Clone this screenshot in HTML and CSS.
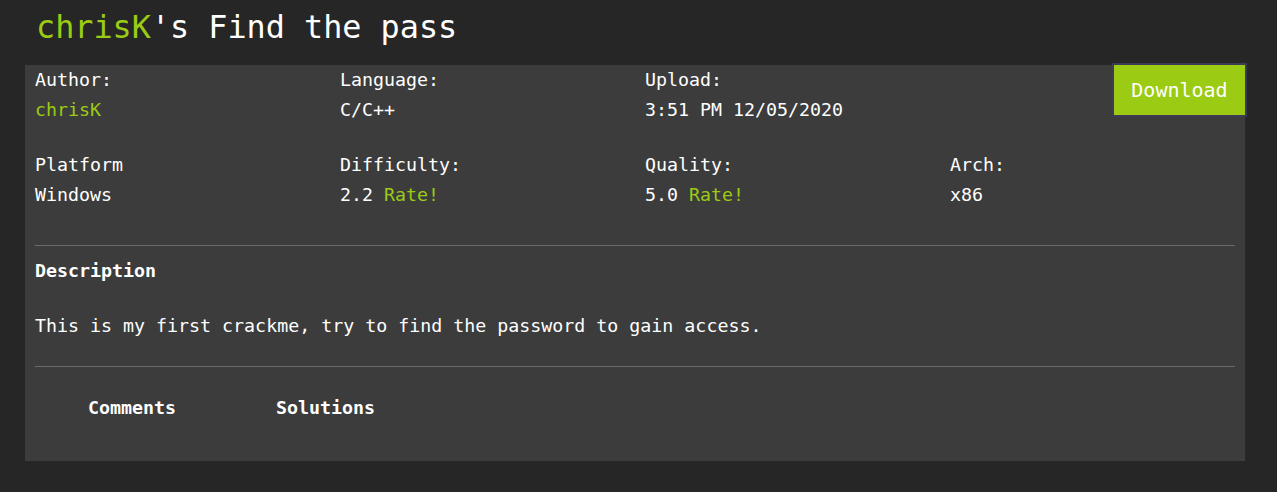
FILE: index.html
```html
<!DOCTYPE html>
<html lang="en">
<head>
<meta charset="utf-8">
<title>chrisK's Find the pass</title>
<link rel="stylesheet" href="styles.css">
</head>
<body>
<div class="page">
  <h1 class="title"><span class="green">chrisK</span>'s Find the pass</h1>
  <div class="card">
    <a class="download" href="#">Download</a>
    <div class="grid">
      <div class="cell"><div class="label">Author:</div><div class="value green">chrisK</div></div>
      <div class="cell"><div class="label">Language:</div><div class="value">C/C++</div></div>
      <div class="cell"><div class="label">Upload:</div><div class="value">3:51 PM 12/05/2020</div></div>
      <div class="cell"></div>
    </div>
    <div class="grid row2">
      <div class="cell"><div class="label">Platform</div><div class="value">Windows</div></div>
      <div class="cell"><div class="label">Difficulty:</div><div class="value">2.2 <span class="green">Rate!</span></div></div>
      <div class="cell"><div class="label">Quality:</div><div class="value">5.0 <span class="green">Rate!</span></div></div>
      <div class="cell"><div class="label">Arch:</div><div class="value">x86</div></div>
    </div>
    <hr class="rule first">
    <div class="desc-title">Description</div>
    <p class="desc">This is my first crackme, try to find the password to gain access.</p>
    <hr class="rule">
    <div class="tabs">
      <span class="tab">Comments</span>
      <span class="tab">Solutions</span>
    </div>
  </div>
</div>
</body>
</html>
```
FILE: styles.css
```css
html, body {
  margin: 0;
  padding: 0;
  background: #262626;
}
body {
  font-family: "DejaVu Sans Mono", "Liberation Mono", monospace;
  color: #ffffff;
  font-size: 18.3px;
}
.page {
  padding: 0 25px;
}
.green {
  color: #9bcb13;
}
.title {
  margin: 0 0 11px 11px;
  font-size: 31.8px;
  font-weight: normal;
  line-height: 54px;
  height: 54px;
}
.card {
  position: relative;
  width: 1220px;
  box-sizing: border-box;
  background: #3c3c3c;
  padding: 0 10px 38px 10px;
}
.download {
  position: absolute;
  top: -2px;
  right: -2px;
  width: 131px;
  height: 50px;
  border: 2px solid #3b3b56;
  background: #9bcb13;
  color: #ffffff;
  text-decoration: none;
  font-size: 20px;
  display: flex;
  align-items: center;
  justify-content: center;
}
.grid {
  display: grid;
  grid-template-columns: repeat(4, 305px);
  line-height: 30px;
}
.row2 {
  margin-top: 25px;
}
.rule {
  border: 0;
  height: 1px;
  background: #6a6a6a;
  margin: 0;
}
.rule.first {
  margin-top: 35px;
}
.desc-title {
  font-weight: bold;
  line-height: 30px;
  margin-top: 10px;
}
.desc {
  margin: 25px 0 25px 0;
  line-height: 30px;
}
.tabs {
  display: flex;
  gap: 100px;
  margin-top: 26px;
  padding-left: 53px;
  line-height: 30px;
  font-weight: bold;
}
```
